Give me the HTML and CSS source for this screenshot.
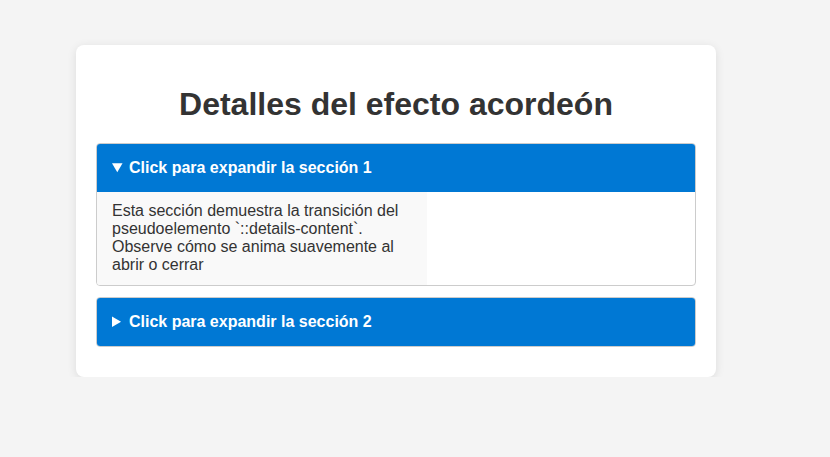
FILE: index.html
```html
<!DOCTYPE html>
<html lang="es">
<head>
<meta charset="utf-8">
<title>Detalles del efecto acordeón</title>
<link rel="stylesheet" href="styles.css">
</head>
<body>
<div class="container">
  <h1>Detalles del efecto acordeón</h1>
  <details class="acc" open>
    <summary>Click para expandir la sección 1</summary>
    <div class="content">Esta sección demuestra la transición del pseudoelemento `::details-content`. Observe cómo se anima suavemente al abrir o cerrar</div>
  </details>
  <details class="acc">
    <summary>Click para expandir la sección 2</summary>
  </details>
</div>
</body>
</html>
```
FILE: styles.css
```css
html, body {
  margin: 0;
  padding: 0;
}
body {
  background: #f4f4f4;
  font-family: "Liberation Sans", Arial, sans-serif;
  color: #333;
  padding: 45px 0 0 76px;
}
.container {
  width: 600px;
  padding: 20px 20px 19px;
  background: #fff;
  border-radius: 8px;
  box-shadow: 0 2px 10px rgba(0, 0, 0, 0.1);
}
h1 {
  text-align: center;
  font-size: 32px;
  margin: 21px 0 20px;
  color: #333;
}
.acc {
  border: 1px solid #ccc;
  border-radius: 4px;
  margin-bottom: 11px;
  overflow: hidden;
}
.acc summary {
  background: #0078d4;
  color: #fff;
  font-weight: bold;
  font-size: 16px;
  padding: 15px;
  cursor: pointer;
}
.content {
  width: 300px;
  padding: 10px 15px 11px;
  background: #f9f9f9;
  font-size: 16px;
  line-height: 18px;
}
```
